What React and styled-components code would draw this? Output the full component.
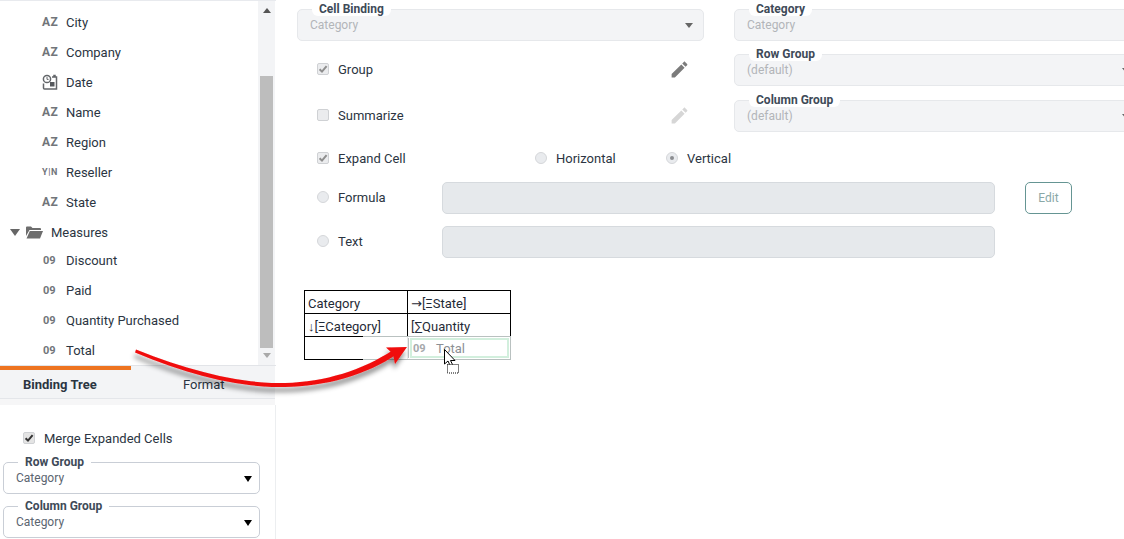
import React from "react";
import styled, { createGlobalStyle } from "styled-components";

const GlobalStyle = createGlobalStyle`
  html, body {
    margin: 0;
    padding: 0;
    background: #fff;
  }
`;

const Page = styled.div`
  position: relative;
  display: flex;
  width: 1124px;
  height: 539px;
  overflow: hidden;
  background: #fff;
  font-family: Roboto, "Liberation Sans", sans-serif;
  font-size: 13px;
  color: #2b3542;
`;

const Sidebar = styled.div`
  display: flex;
  flex-direction: column;
  width: 276px;
  flex-shrink: 0;
  box-sizing: border-box;
  border-top: 1px solid #e8eaee;
`;

const TreeArea = styled.div`
  display: flex;
  height: 364px;
  border-bottom: 1px solid #e2e4e8;
  box-sizing: content-box;
`;

const Tree = styled.div`
  flex: 1;
  padding-top: 6px;
`;

const TreeRow = styled.div`
  display: flex;
  align-items: center;
  height: 30px;
  padding-left: 42px;
  margin-top: ${p => p.$mt || 0}px;
`;

const FolderRow = styled(TreeRow)`
  padding-left: 10px;
`;

const TypeIcon = styled.span`
  width: 24px;
  flex-shrink: 0;
  font-weight: 700;
  font-size: ${p => p.$size || 12}px;
  letter-spacing: ${p => p.$spacing || 0}px;
  color: #71757a;
  padding-left: ${p => p.$pad || 0}px;
  box-sizing: border-box;
  white-space: nowrap;
`;

const ExpandCaret = styled.span`
  width: 0;
  height: 0;
  border-left: 5px solid transparent;
  border-right: 5px solid transparent;
  border-top: 7px solid #666;
  margin-right: 6px;
`;

const Scrollbar = styled.div`
  position: relative;
  width: 17px;
  margin-right: 1px;
  background: #f3f4f6;
  display: flex;
  flex-direction: column;
  align-items: center;
`;

const ScrollUp = styled.span`
  width: 0;
  height: 0;
  margin-top: 7px;
  border-left: 4px solid transparent;
  border-right: 4px solid transparent;
  border-bottom: 5px solid #555;
`;

const ScrollThumb = styled.div`
  width: 13px;
  height: 272px;
  margin-top: 63px;
  background: #bdbdbd;
`;

const ScrollDown = styled.span`
  width: 0;
  height: 0;
  margin-top: 5px;
  border-left: 4px solid transparent;
  border-right: 4px solid transparent;
  border-top: 5px solid #a9a9a9;
`;

const TabBar = styled.div`
  display: flex;
  height: 33px;
  box-sizing: border-box;
  margin-right: 1px;
  background: #f3f4f6;
  border-bottom: 1px solid #e4e6ea;
`;

const Tab = styled.div`
  width: ${p => p.$width}px;
  box-sizing: border-box;
  padding-left: ${p => p.$pad}px;
  line-height: 30px;
  font-weight: ${p => (p.$active ? 700 : 400)};
  border-top: 4px solid ${p => (p.$active ? "#ee7420" : "transparent")};
  white-space: nowrap;
  overflow: hidden;
`;

const TabGap = styled.div`
  height: 6px;
  margin-right: 1px;
  background: #f6f6f7;
`;

const SidePanel = styled.div`
  flex: 1;
  border-right: 1px solid #eceef0;
  padding: 26px 0 0 3px;
`;

const SideCheckRow = styled.label`
  display: flex;
  align-items: center;
  height: 14px;
  margin: 0 0 17px 20px;
`;

const FieldBox = styled.div`
  position: relative;
  box-sizing: border-box;
  width: ${p => p.$width}px;
  height: 32px;
  margin-top: ${p => p.$mt || 0}px;
  padding: 0 12px;
  display: flex;
  align-items: center;
  justify-content: space-between;
  font-size: 12px;
  border-radius: 5px;
  background: ${p => (p.$disabled ? "#f3f4f6" : "#fff")};
  border: 1px solid ${p => (p.$disabled ? "#e6e8eb" : "#c9ced6")};
  color: ${p => (p.$disabled ? "#b2b5b9" : "#5b6570")};
`;

const FieldLegend = styled.span`
  position: absolute;
  top: -10px;
  left: 14px;
  height: 16px;
  line-height: 19px;
  padding: 0 7px;
  background: #fff;
  border-radius: 0 0 6px 6px;
  font-size: 12px;
  font-weight: 700;
  color: #3e4a58;
  white-space: nowrap;
`;

const Caret = styled.span`
  position: absolute;
  right: ${p => p.$right}px;
  top: 13px;
  width: 0;
  height: 0;
  border-left: 4px solid transparent;
  border-right: 4px solid transparent;
  border-top: ${p => (p.$dark ? "6px solid #000" : "5px solid #666")};
`;

const Main = styled.div`
  flex: 1;
  min-width: 0;
  padding: 9px 0 0 21px;
`;

const TopBlock = styled.div`
  display: flex;
  gap: 30px;
`;

const Column = styled.div`
  width: 407px;
  flex-shrink: 0;
`;

const OptionRow = styled.div`
  display: flex;
  align-items: center;
  justify-content: space-between;
  height: 46px;
  padding: 0 14px 0 20px;
  margin-top: ${p => p.$mt || 0}px;
`;

const CheckLabel = styled.label`
  display: flex;
  align-items: center;
`;

const RaisedLabel = styled(CheckLabel)`
  margin-bottom: 2px;
`;

const CheckBox = styled.span`
  display: flex;
  align-items: center;
  justify-content: center;
  box-sizing: border-box;
  width: 12px;
  height: 12px;
  margin-right: 9px;
  border-radius: 2px;
  background: ${p => (p.$strong ? "#e4e4e4" : "#ebecee")};
  border: 1px solid #cfd1d4;
`;

const RadioDot = styled.span`
  display: flex;
  align-items: center;
  justify-content: center;
  box-sizing: border-box;
  width: 12px;
  height: 12px;
  margin-right: 9px;
  border-radius: 50%;
  background: #e9ebee;
  border: 1px solid #d5d7da;

  &::after {
    content: "";
    display: ${p => (p.$on ? "block" : "none")};
    width: 4px;
    height: 4px;
    border-radius: 50%;
    background: #8b8d90;
  }
`;

const ExpandRow = styled.div`
  display: grid;
  grid-template-columns: 218px 131px auto;
  align-items: center;
  height: 24px;
  margin: 8px 0 12px 20px;
`;

const FormulaRow = styled.div`
  display: grid;
  grid-template-columns: 125px 553px 47px;
  align-items: center;
  height: 32px;
  margin: 0 0 12px 20px;
`;

const GrayInput = styled.div`
  height: 32px;
  box-sizing: border-box;
  background: #e6e9ec;
  border: 1px solid #d6dade;
  border-radius: 5px;
`;

const EditButton = styled.button`
  width: 47px;
  height: 32px;
  margin-left: 30px;
  padding: 0;
  background: #fff;
  border: 1px solid #659593;
  border-radius: 5px;
  font-family: inherit;
  font-size: 12px;
  color: #8aa8a7;
`;

const TableWrap = styled.div`
  position: relative;
  width: 207px;
  margin: 32px 0 0 7px;
`;

const BindingTable = styled.table`
  border-collapse: collapse;
  table-layout: fixed;
  width: 207px;
  font-size: 13px;
  color: #1f2a36;

  td {
    box-sizing: border-box;
    height: 23px;
    padding: 3px 3px 0;
    border: 1px solid #000;
    white-space: nowrap;
    overflow: hidden;
    line-height: 18px;
  }
`;

const ArrowGlyph = styled.span`
  font-family: "DejaVu Sans", sans-serif;
`;

const DragGhost = styled.div`
  position: absolute;
  left: 59px;
  top: 46px;
  width: 148px;
  height: 24px;
  box-sizing: border-box;
  display: flex;
  justify-content: flex-end;
  background: rgba(255, 255, 255, 0.92);
  border: 1px solid #b9c1c0;
  border-left: 0;
`;

const GhostCell = styled.div`
  width: 99px;
  margin: 1px 1px 1px 0;
  box-sizing: border-box;
  display: flex;
  align-items: center;
  padding-left: 1px;
  background: #fff;
  border: 2px solid #d2efdd;
  box-shadow: -1px 0 0 #fff, -2px 0 0 #b9c1c0;
  color: #8c9095;
`;

const GhostIcon = styled.span`
  width: 23px;
  font-size: 11px;
  font-weight: 700;
  color: #a5a8ab;
`;

const Annotation = styled.svg`
  position: absolute;
  left: 130px;
  top: 340px;
  overflow: visible;
  pointer-events: none;
`;

const DragCursor = styled.svg`
  position: absolute;
  left: 444px;
  top: 349px;
`;

const SmallIcon = styled.svg`
  margin-right: 8px;
  flex-shrink: 0;
`;

const PencilIcon = ({ faded }) => (
  <svg width="21" height="21" viewBox="0 0 24 24" fill={faded ? "#d6d6d6" : "#7b7b7b"}>
    <path d="M3 17.25V21h3.75L17.81 9.94l-3.75-3.75L3 17.25zM20.71 7.04c.39-.39.39-1.02 0-1.41l-2.34-2.34c-.39-.39-1.02-.39-1.41 0l-1.83 1.83 3.75 3.75 1.83-1.83z" />
  </svg>
);

const CheckMark = ({ color = "#8e8e8e" }) => (
  <svg width="10" height="10" viewBox="0 0 10 10">
    <path d="M1.6 5.2 4 7.6 8.6 2.2" fill="none" stroke={color} strokeWidth="2" />
  </svg>
);

const DateIcon = () => (
  <SmallIcon width="16" height="16" viewBox="0 0 16 16">
    <circle cx="5" cy="5" r="3.6" fill="#fff" stroke="#63666a" strokeWidth="1.5" />
    <path d="M5 3v2.4h1.6" fill="none" stroke="#63666a" strokeWidth="1" />
    <path d="M10 3h2v-1.500h1V3h1.500v12H2.500a1 1 0 0 1-1-1V9.500" fill="none" stroke="#63666a" strokeWidth="1.500" />
    <rect x="8" y="8" width="4.500" height="4.500" fill="#55585c" />
  </SmallIcon>
);

const FolderIcon = () => (
  <SmallIcon width="17" height="13" viewBox="0 0 17 13">
    <path d="M0 1.500a1 1 0 0 1 1-1h4l1.500 1.500H14a1 1 0 0 1 1 1V4H3.500L0 10z" fill="#6d6d6d" />
    <path d="M3.800 5H17l-3 7.500H0.500z" fill="#6d6d6d" />
  </SmallIcon>
);

const fields = [
  ["AZ", "City"],
  ["AZ", "Company"],
  ["date", "Date"],
  ["AZ", "Name"],
  ["AZ", "Region"],
  ["YN", "Reseller"],
  ["AZ", "State"],
];

const measures = ["Discount", "Paid", "Quantity Purchased", "Total"];

function FieldIcon({ type }) {
  if (type === "date") return <DateIcon />;
  if (type === "YN") return <TypeIcon $size={9} $spacing={0.6}>Y|N</TypeIcon>;
  return <TypeIcon $spacing={0.4}>AZ</TypeIcon>;
}

function Field({ legend, value, width, disabled, caret, dark, mt }) {
  return (
    <FieldBox $width={width} $disabled={disabled} $mt={mt}>
      <FieldLegend>{legend}</FieldLegend>
      <span>{value}</span>
      {caret && <Caret $dark={dark} $right={dark ? 7 : 10} />}
    </FieldBox>
  );
}

function App() {
  return (
    <Page>
      <GlobalStyle />
      <Sidebar>
        <TreeArea>
          <Tree>
            {fields.map(([type, name]) => (
              <TreeRow key={name}>
                <FieldIcon type={type} />
                {name}
              </TreeRow>
            ))}
            <FolderRow>
              <ExpandCaret />
              <FolderIcon />
              Measures
            </FolderRow>
            {measures.map((name, i) => (
              <TreeRow key={name} $mt={i === 0 ? -2 : 0}>
                <TypeIcon $size={11} $pad={1}>09</TypeIcon>
                {name}
              </TreeRow>
            ))}
          </Tree>
          <Scrollbar>
            <ScrollUp />
            <ScrollThumb />
            <ScrollDown />
          </Scrollbar>
        </TreeArea>
        <TabBar>
          <Tab $active $width={131} $pad={23}>Binding Tree</Tab>
          <Tab $width={144} $pad={52}>Format</Tab>
        </TabBar>
        <TabGap />
        <SidePanel>
          <SideCheckRow>
            <CheckBox $strong>
              <CheckMark color="#333" />
            </CheckBox>
            Merge Expanded Cells
          </SideCheckRow>
          <Field legend="Row Group" value="Category" width={257} caret dark />
          <Field legend="Column Group" value="Category" width={257} caret dark mt={12} />
        </SidePanel>
      </Sidebar>

      <Main>
        <TopBlock>
          <Column>
            <Field legend="Cell Binding" value="Category" width={407} disabled caret />
            <OptionRow $mt={5}>
              <CheckLabel>
                <CheckBox>
                  <CheckMark />
                </CheckBox>
                Group
              </CheckLabel>
              <PencilIcon />
            </OptionRow>
            <OptionRow>
              <CheckLabel>
                <CheckBox />
                Summarize
              </CheckLabel>
              <PencilIcon faded />
            </OptionRow>
          </Column>
          <Column>
            <Field legend="Category" value="Category" width={407} disabled />
            <Field legend="Row Group" value="(default)" width={407} disabled caret mt={13} />
            <Field legend="Column Group" value="(default)" width={407} disabled caret mt={14} />
          </Column>
        </TopBlock>

        <ExpandRow>
          <CheckLabel>
            <CheckBox>
              <CheckMark />
            </CheckBox>
            Expand Cell
          </CheckLabel>
          <CheckLabel>
            <RadioDot />
            Horizontal
          </CheckLabel>
          <CheckLabel>
            <RadioDot $on />
            Vertical
          </CheckLabel>
        </ExpandRow>
        <FormulaRow>
          <RaisedLabel>
            <RadioDot />
            Formula
          </RaisedLabel>
          <GrayInput />
          <EditButton>Edit</EditButton>
        </FormulaRow>
        <FormulaRow>
          <RaisedLabel>
            <RadioDot />
            Text
          </RaisedLabel>
          <GrayInput />
        </FormulaRow>

        <TableWrap>
          <BindingTable>
            <tbody>
              <tr>
                <td>Category</td>
                <td>
                  <ArrowGlyph>→</ArrowGlyph>[ΞState]
                </td>
              </tr>
              <tr>
                <td>↓[ΞCategory]</td>
                <td>[∑Quantity</td>
              </tr>
              <tr>
                <td />
                <td />
              </tr>
            </tbody>
          </BindingTable>
          <DragGhost>
            <GhostCell>
              <GhostIcon>09</GhostIcon>
              Total
            </GhostCell>
          </DragGhost>
        </TableWrap>
      </Main>

      <Annotation width="290" height="60" viewBox="0 0 290 60">
        <defs>
          <filter id="arrowShadow" x="-10%" y="-40%" width="120%" height="200%">
            <feDropShadow dx="-1" dy="5" stdDeviation="2.5" floodColor="#000" floodOpacity="0.45" />
          </filter>
        </defs>
        <g filter="url(#arrowShadow)">
          <path
            d="M6 9.500C60 31 110 44 155 43C195 42 233 30 263 10L267 14C237 35 195 46.500 155 47C110 48 59 35 5 12.500Z"
            fill="#f00b0b"
          />
          <path d="M277 7 256 7.500 263 14 265 24Z" fill="#f00b0b" />
        </g>
      </Annotation>

      <DragCursor width="16" height="25" viewBox="0 0 16 25">
        <path d="M0.500 0.500V15L4 12l2.500 5.500 2.500-1L6.500 11.500H11Z" fill="#fff" stroke="#000" strokeWidth="1" />
        <rect x="3.500" y="15.500" width="11" height="8.500" fill="#fff" stroke="#000" strokeWidth="1" strokeDasharray="1 1" />
      </DragCursor>
    </Page>
  );
}

export default App;
